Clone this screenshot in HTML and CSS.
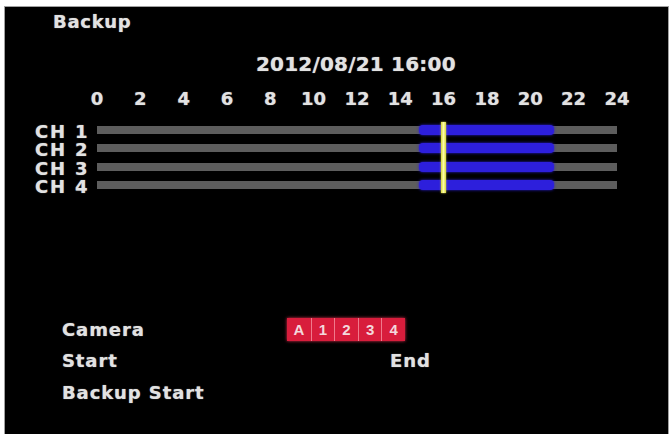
FILE: index.html
```html
<!DOCTYPE html>
<html>
<head>
<meta charset="utf-8">
<link rel="stylesheet" href="styles.css">
</head>
<body>
<div class="screen">
  <div class="title">Backup</div>
  <div class="date">2012/08/21 16:00</div>
  <div class="hours">
    <span>0</span><span>2</span><span>4</span><span>6</span><span>8</span><span>10</span><span>12</span><span>14</span><span>16</span><span>18</span><span>20</span><span>22</span><span>24</span>
  </div>
  <div class="channels">
    <div class="row"><span class="ch">CH 1</span><div class="bar"><div class="rec"></div></div></div>
    <div class="row"><span class="ch">CH 2</span><div class="bar"><div class="rec"></div></div></div>
    <div class="row"><span class="ch">CH 3</span><div class="bar"><div class="rec"></div></div></div>
    <div class="row"><span class="ch">CH 4</span><div class="bar"><div class="rec"></div></div></div>
    <div class="cursor"></div>
  </div>
  <div class="form">
    <div class="frow">
      <span class="lbl">Camera</span>
      <div class="cams"><span>A</span><span>1</span><span>2</span><span>3</span><span>4</span></div>
    </div>
    <div class="frow">
      <span class="lbl">Start</span>
      <span class="end">End</span>
    </div>
    <div class="frow">
      <span class="lbl">Backup Start</span>
    </div>
  </div>
</div>
</body>
</html>
```
FILE: styles.css
```css
html, body {
  margin: 0;
  padding: 0;
  background: #ffffff;
}
body {
  font-family: "DejaVu Sans", "Liberation Sans", sans-serif;
  font-weight: bold;
  color: #e2e2e2;
}
.screen {
  margin: 6px 0 0 4px;
  width: 663px;
  height: 424px;
  background: #000;
  border: 1px solid #a0a0a0;
  padding-top: 4px;
  box-sizing: content-box;
  text-shadow: 0 0 1px rgba(225,225,225,0.7);
}
.screen > * { box-sizing: border-box; }
.title {
  font-size: 18px;
  line-height: 22px;
  letter-spacing: 0.7px;
  margin-left: 48px;
  height: 22px;
}
.date {
  font-size: 20px;
  line-height: 24px;
  letter-spacing: 0.2px;
  margin: 19px 0 0 251px;
  height: 24px;
}
.hours {
  display: flex;
  margin: 11px 0 0 70.33px;
  font-size: 18px;
  line-height: 24px;
  height: 24px;
}
.hours span {
  width: 43.33px;
  flex: none;
  text-align: center;
}
.channels {
  position: relative;
  margin-top: 10px;
  padding-left: 30px;
}
.row {
  display: flex;
  align-items: center;
  height: 18.33px;
}
.ch {
  width: 62px;
  flex: none;
  font-size: 18px;
  line-height: 18px;
  letter-spacing: 1.8px;
  position: relative;
  top: 2px;
  white-space: nowrap;
}
.bar {
  position: relative;
  width: 520px;
  height: 8px;
  background: #5d5d5d;
  flex: none;
}
.rec {
  position: absolute;
  left: 322px;
  width: 135px;
  top: -1px;
  height: 10px;
  background: #2d1fdc;
  border-radius: 4px;
  box-shadow: 0 0 3px #2d1fdc;
}
.cursor {
  position: absolute;
  left: 436px;
  top: 1px;
  width: 5px;
  height: 71px;
  background: linear-gradient(to right, #d8d83a, #fbfba8, #d8d83a);
  box-shadow: 0 0 2px #e0e040;
}
.form {
  margin: 119px 0 0 57px;
}
.frow {
  display: grid;
  grid-template-columns: 225px auto;
  align-items: center;
  height: 31.5px;
  font-size: 18px;
  letter-spacing: 0.9px;
}
.lbl { white-space: nowrap; }
.cams {
  display: flex;
  width: max-content;
  background: #d81d3c;
  box-shadow: 0 0 3px #e03050;
  height: 23px;
}
.cams span {
  width: 23.6px;
  height: 23px;
  display: flex;
  align-items: center;
  justify-content: center;
  font-family: "Liberation Sans", sans-serif;
  font-size: 15px;
  letter-spacing: 0;
  color: #f3d8dc;
  text-shadow: none;
  border-left: 1px solid #f07a8c;
  box-sizing: border-box;
}
.cams span:first-child { border-left: none; }
.end {
  margin-left: 103px;
}
```
